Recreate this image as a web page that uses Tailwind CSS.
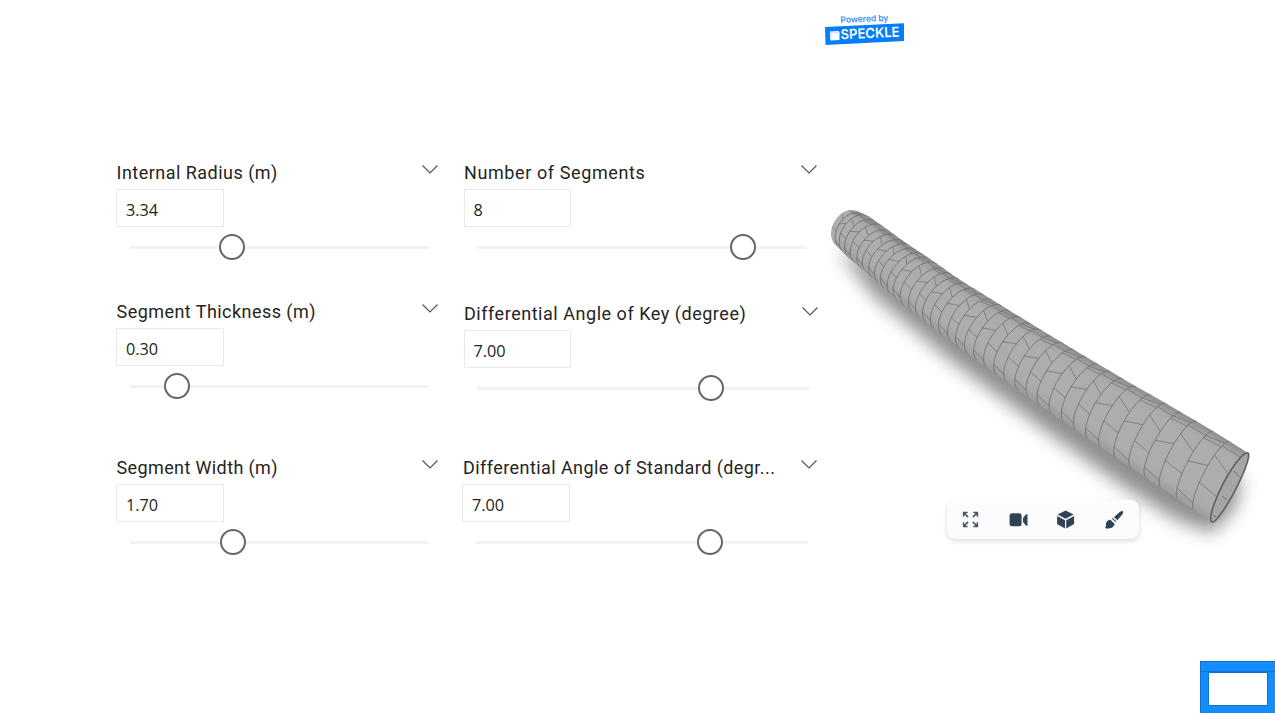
<!DOCTYPE html>
<html lang="en">
<head>
<meta charset="utf-8">
<title>Tunnel parameters</title>
<script src="https://cdn.jsdelivr.net/npm/@tailwindcss/browser@4"></script>
</head>
<body class="w-[1275px] h-[713px] overflow-hidden bg-white font-['Roboto',sans-serif] text-[#252423]">
<div class="relative flex w-[1275px] h-[713px] overflow-hidden">
  <main class="flex gap-[22px] pl-[116px] pt-[159px] w-[820px] shrink-0">
    <section class="flex flex-col w-[326px] shrink-0">
      <div class="h-[101px]">
        <div class="flex justify-between h-[30px]"><h2 class="pt-[3px] pl-[0.5px] text-[18px] leading-[22px] tracking-[0.48px] whitespace-nowrap">Internal Radius (m)</h2><svg class="w-4 h-[9px] mt-[6px] mr-[4px]" viewBox="0 0 16 9" fill="none" stroke="#555" stroke-width="1.2"><path d="M.5.5 8 8 15.500.5"/></svg></div>
        <div class="w-[108px] h-[38px] border border-[#eaeaea] pl-[9px] pt-[2px] text-[16.250px] leading-[36px] font-['Open_Sans',sans-serif]">3.34</div>
        <div class="relative h-[3px] w-[299px] ml-[13.5px] mt-[18.5px] bg-[#f2f2f1]"><i class="absolute -top-[12px] size-[26px] rounded-full bg-white border-2 border-[#666]" style="left:89px"></i></div>
      </div>
      <div class="h-[101px] mt-[38px]">
        <div class="flex justify-between h-[30px]"><h2 class="pt-[3px] pl-[0.5px] text-[18px] leading-[22px] tracking-[0.45px] whitespace-nowrap">Segment Thickness (m)</h2><svg class="w-4 h-[9px] mt-[6px] mr-[4px]" viewBox="0 0 16 9" fill="none" stroke="#555" stroke-width="1.2"><path d="M.5.5 8 8 15.500.5"/></svg></div>
        <div class="w-[108px] h-[38px] border border-[#eaeaea] pl-[9px] pt-[2px] text-[16.250px] leading-[36px] font-['Open_Sans',sans-serif]">0.30</div>
        <div class="relative h-[3px] w-[299px] ml-[13.5px] mt-[18.5px] bg-[#f2f2f1]"><i class="absolute -top-[12px] size-[26px] rounded-full bg-white border-2 border-[#666]" style="left:34px"></i></div>
      </div>
      <div class="h-[101px] mt-[55px]">
        <div class="flex justify-between h-[30px]"><h2 class="pt-[3px] pl-[0.5px] text-[18px] leading-[22px] tracking-[0.38px] whitespace-nowrap">Segment Width (m)</h2><svg class="w-4 h-[9px] mt-[6px] mr-[4px]" viewBox="0 0 16 9" fill="none" stroke="#555" stroke-width="1.2"><path d="M.5.5 8 8 15.500.5"/></svg></div>
        <div class="w-[108px] h-[38px] border border-[#eaeaea] pl-[9px] pt-[2px] text-[16.250px] leading-[36px] font-['Open_Sans',sans-serif]">1.70</div>
        <div class="relative h-[3px] w-[299px] ml-[13.5px] mt-[18.5px] bg-[#f2f2f1]"><i class="absolute -top-[12px] size-[26px] rounded-full bg-white border-2 border-[#666]" style="left:90.5px"></i></div>
      </div>
    </section>
    <section class="flex flex-col w-[356px] shrink-0">
      <div class="h-[101px]">
        <div class="flex justify-between h-[30px]"><h2 class="pt-[3px] text-[18px] leading-[22px] tracking-[0.6px] whitespace-nowrap">Number of Segments</h2><svg class="w-4 h-[9px] mt-[6px] mr-[3px]" viewBox="0 0 16 9" fill="none" stroke="#555" stroke-width="1.2"><path d="M.5.5 8 8 15.500.5"/></svg></div>
        <div class="w-[107px] h-[38px] border border-[#eaeaea] pl-[8.500px] pt-[2px] text-[16.250px] leading-[36px] font-['Open_Sans',sans-serif]">8</div>
        <div class="relative h-[3px] w-[330px] ml-[13px] mt-[18.5px] bg-[#f2f2f1]"><i class="absolute -top-[12px] size-[26px] rounded-full bg-white border-2 border-[#666]" style="left:252.5px"></i></div>
      </div>
      <div class="h-[101px] mt-[40px]">
        <div class="flex justify-between h-[30px]"><h2 class="pt-[3px] text-[18px] leading-[22px] tracking-[0.53px] whitespace-nowrap">Differential Angle of Key (degree)</h2><svg class="w-4 h-[9px] mt-[7px] mr-[2px]" viewBox="0 0 16 9" fill="none" stroke="#555" stroke-width="1.2"><path d="M.5.5 8 8 15.500.5"/></svg></div>
        <div class="w-[107px] h-[38px] border border-[#eaeaea] pl-[8.500px] pt-[2px] text-[16.250px] leading-[36px] font-['Open_Sans',sans-serif]">7.00</div>
        <div class="relative h-[3px] w-[332px] ml-[13px] mt-[18.5px] bg-[#f2f2f1]"><i class="absolute -top-[12px] size-[26px] rounded-full bg-white border-2 border-[#666]" style="left:221px"></i></div>
      </div>
      <div class="h-[101px] mt-[53px] -ml-[2px]">
        <div class="flex justify-between h-[30px]"><h2 class="pt-[3px] pl-px text-[18px] leading-[22px] tracking-[0.43px] whitespace-nowrap">Differential Angle of Standard (degr...</h2><svg class="w-4 h-[9px] mt-[6px] mr-[3px]" viewBox="0 0 16 9" fill="none" stroke="#555" stroke-width="1.2"><path d="M.5.5 8 8 15.500.5"/></svg></div>
        <div class="w-[108px] h-[38px] border border-[#eaeaea] pl-[9px] pt-[2px] text-[16.250px] leading-[36px] font-['Open_Sans',sans-serif]">7.00</div>
        <div class="relative h-[3px] w-[332px] ml-[13.5px] mt-[18.5px] bg-[#f2f2f1]"><i class="absolute -top-[12px] size-[26px] rounded-full bg-white border-2 border-[#666]" style="left:221px"></i></div>
      </div>
    </section>
  </main>

  <!-- 3D viewer -->
  <aside class="relative w-[455px] h-[713px] shrink-0">
    <svg id="viewer" class="absolute inset-0" width="455" height="713" viewBox="820 0 455 713">
      <defs>
        <filter id="soft" x="-20%" y="-20%" width="140%" height="140%"><feGaussianBlur stdDeviation="9"/></filter>
        <filter id="edge" x="-20%" y="-20%" width="140%" height="140%"><feGaussianBlur stdDeviation="4"/></filter>
        <clipPath id="clip"><path id="clipShape"/></clipPath>
      </defs>
      <path d="M838 250 874 296 950 360 1050 434 1120 484 1175 519 1211 533 1234 510 1242 480 1200 460 1000 340 880 265Z" fill="#4a4a4a" opacity=".62" filter="url(#soft)"/>
      <path id="body" fill="#adadad"/>
      <g clip-path="url(#clip)">
        <path id="topShade" fill="none" stroke="#606060" stroke-width="8" opacity=".55" filter="url(#edge)"/>
        <path id="lowShade" fill="none" stroke="#777" stroke-width="8" opacity=".4" filter="url(#edge)"/>
        <path id="rings" fill="none" stroke="#6a6a6a" stroke-width=".75"/>
        <path id="joints" fill="none" stroke="#707070" stroke-width=".7"/>
      </g>
      <path id="mouth" fill="#a6a6a6" stroke="#606060" stroke-width="1.6"/>
      <path d="M1234 471 1239 477M1222 496 1227 500M1213 515 1216 517" stroke="#6a6a6a" stroke-width=".9"/>
    </svg>

    <div class="absolute left-[5px] top-[13px] w-[80px] h-[34px]">
      <svg width="80" height="34" viewBox="825 13 80 34" font-family="Inter, sans-serif">
        <path d="M825 27 904 23.200V41L825.500 45Z" fill="#047efb"/>
        <g transform="rotate(-2.700 865 33)">
          <text x="841" y="21.800" font-size="8.800" font-weight="500" fill="#1683fb" textLength="48" lengthAdjust="spacingAndGlyphs">Powered by</text>
          <text x="840.500" y="38.200" font-size="13.800" font-weight="600" fill="#fff" textLength="59" lengthAdjust="spacingAndGlyphs">SPECKLE</text>
        </g>
        <path d="M830 31.500 838.500 31 839.500 32.500V40L831 40.500 830 39Z" fill="#fff"/><path d="M830 31.500 831 33V40.500M831 33 839.500 32.500" fill="none" stroke="#b5d5fb" stroke-width=".8"/>
      </svg>
    </div>

    <div class="absolute left-[127px] top-[500px] flex w-[192px] h-[39px] rounded-lg bg-[#fcfcfc] shadow-[0_2px_5px_rgba(0,0,0,0.14)] text-[#334155]">
      <div class="flex flex-1 items-center justify-center"><svg width="17" height="17" viewBox="0 0 18 18" fill="none" stroke="#475569" stroke-width="1.600"><path d="M1.700 6V1.700H6M2 2 6.500 6.500M12 1.700H16.300V6M16 2 11.500 6.500M1.700 12V16.300H6M2 16 6.500 11.500M12 16.300H16.300V12M16 16 11.500 11.500"/></svg></div>
      <div class="flex flex-1 items-center justify-center"><svg width="20" height="20" viewBox="0 0 20 20" fill="currentColor"><rect x=".6" y="3.200" width="12" height="13" rx="2.500"/><path d="M14 8 17 4.500Q18.500 3.500 18.500 5V15Q18.500 16.500 17 15.500L14 12Z"/></svg></div>
      <div class="flex flex-1 items-center justify-center"><svg width="20" height="20" viewBox="0.400 0.400 20 20" fill="currentColor"><path d="M10 1 18 5 10 9.200 2 5ZM1.500 6.500 9.400 10.600V18.800L1.500 14.500ZM18.500 6.500 10.600 10.600V18.800L18.500 14.500Z"/></svg></div>
      <div class="flex flex-1 items-center justify-center pr-px"><svg width="20" height="20" viewBox="0 0 20 20" fill="currentColor"><path d="M18.800 1.200C19.600 2.200 19 3.500 17.800 5L13.400 10.200 10 6.900 15.500 2.300Q17.800.5 18.800 1.200ZM9.100 7.600 12.600 11 11.500 12.100 8 8.700ZM6.900 9.800 10.500 13.300C10.800 16.500 7.500 19.500 1.500 18.200 1 18 1 17.400 1.600 17 2.500 16.500 1.500 14.500 2.300 12.500 3.200 10.500 5 9.700 6.900 9.800Z"/><path d="m7 9.800 3.500 3.400M9 7.700 12.500 11.100" stroke="#fcfcfc" stroke-width="1"/></svg></div>
    </div>

    <div class="absolute left-[379.5px] top-[661px] w-[76px] h-[52px] bg-[#118dff] border-t border-l border-[#1272c8]">
      <div class="mt-[10px] ml-[7.5px] w-[60px] h-[34px] border border-[#1272c8] bg-white"></div>
    </div>
    <div class="absolute left-[380px] top-[671px] w-[75px] h-px bg-[#1272c8]"></div>
  </aside>
</div>
<script>
const top_ = [[850,211],[858,211.5],[870,217],[903,241],[933,261],[960,280],[1003,306.500],[1047,333.500],[1093,361],[1137,387],[1167,404],[1213,431],[1248,453]];
const low_ = [[833,240],[837,246],[850,259],[867,273],[897,300],[930,325],[960,348],[993,372],[1027,396],[1060,419],[1102,448],[1133,469],[1177,498],[1212,522]];
const at = (a, x) => { let i = 1; while (i < a.length - 1 && a[i][0] < x) i++; const [p, q] = [a[i-1], a[i]]; return p[1] + (q[1]-p[1]) * (x-p[0]) / (q[0]-p[0]); };
const xs = [837,841,845,850,855,861,866,872,878,884,891,897,904,912,919,926,934,942,951,959,968,977,987,997,1007,1018,1029,1040,1052,1064,1076,1088,1101,1116,1131,1146,1161,1178,1194,1212];
const rings = xs.map(x => {
  const k = (x - 837) / 375, tx = x + (x < 870 ? 21 + (x-837)/33*12 : 33 + 3 * (x-870)/342);
  return { b: [x, at(low_, x)], t: [tx, at(top_, tx)], r: 0.74 - 0.54 * Math.pow(k, 0.7) };
});
/* point on the visible half of a ring: u runs from the lower edge (0) to the upper edge (1) */
const pt = (g, u, s = 1) => {
  const th = u * Math.PI, dx = g.t[0]-g.b[0], dy = g.t[1]-g.b[1];
  const c = (1 - Math.cos(th)) / 2, m = Math.sin(th) / 2 * g.r * s;
  return [g.b[0] + dx*c + dy*m, g.b[1] + dy*c - dx*m];
};
const f = p => p[0].toFixed(1) + ' ' + p[1].toFixed(1);
const arc = (g, s = 1) => Array.from({length: 21}, (_, i) => f(pt(g, i/20, s)));
const set = (id, d) => document.getElementById(id).setAttribute('d', d);
const first = rings[0], last = rings[rings.length-1];
const tops = rings.map(g => f(g.t)), lows = rings.map(g => f(g.b));
const outline = 'M' + arc(first).concat(tops, lows.slice().reverse()).join('L') + 'Z';
set('body', outline); set('clipShape', outline);
set('topShade', 'M' + tops.join('L')); set('lowShade', 'M' + lows.join('L'));
set('rings', rings.slice(1).map(g => 'M' + arc(g).join('L')).join(''));
const A = [[.40,.38],[.67,.59],[.80,.80]], B = [[.22,.17],[.50,.56],[.76,.78],[.80,.86]];
let j = '';
for (let i = 0; i < rings.length - 1; i++)
  for (const [l, r] of (rings.length - 2 - i) % 2 ? B : A) j += 'M' + f(pt(rings[i], l)) + 'L' + f(pt(rings[i+1], r));
set('joints', j);
set('mouth', 'M' + arc(last, 1).concat(arc(last, -.75).reverse()).join('L') + 'Z');
</script>
</body>
</html>
